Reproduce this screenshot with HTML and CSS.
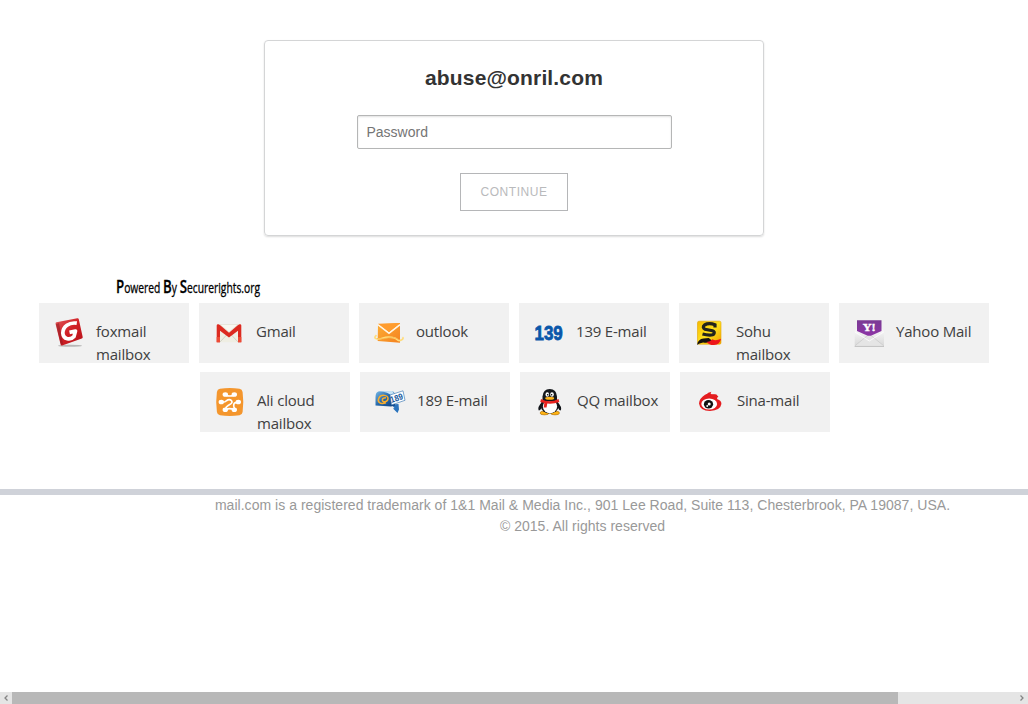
FILE: index.html
```html
<!DOCTYPE html>
<html lang="en">
<head>
<meta charset="utf-8">
<title>Mail sign in</title>
<link rel="stylesheet" href="styles.css">
</head>
<body>
<div class="page">
  <form class="login">
    <h1 class="account">abuse@onril.com</h1>
    <input class="password" type="password" placeholder="Password" aria-label="Password">
    <button class="continue" type="button">CONTINUE</button>
  </form>

  <p class="powered"><span class="powered-text"><b>P</b>owered <b>B</b>y <b>S</b>ecurerights.org</span></p>

  <div class="providers">
    <div class="card">
      <svg class="icon" viewBox="0 0 32 32">
        <defs><linearGradient id="fox" x1="0" y1="0" x2="1" y2="1"><stop offset="0" stop-color="#e0595a"/><stop offset=".5" stop-color="#d01f25"/><stop offset="1" stop-color="#b5121a"/></linearGradient></defs>
        <ellipse cx="17" cy="29.8" rx="12" ry="1" fill="#aaa" opacity=".8"/>
        <path d="M3.5 6.3 24.3 2.3q1.2-.2 1.5 1L29.7 21q.2 1.1-.9 1.5L9.2 29.4q-1.3.4-1.6-.9L2.6 7.9q-.3-1.3.9-1.6Z" fill="url(#fox)"/>
        <path d="M3 8.2 8 28.7l2-.7L6 7Z" fill="#8e1820" opacity=".55"/>
        <path d="M23.8 7.200 C16 6 10 10.500 9.800 17 C10.300 23.500 17.500 24.500 21 20.500 L22.500 15 L16.500 16.400" fill="none" stroke="#fff" stroke-width="3.700" stroke-linejoin="round"/>
      </svg>
      <span class="name">foxmail mailbox</span>
    </div>
    <div class="card">
      <svg class="icon" viewBox="0 0 32 32">
        <rect x="5" y="8.5" width="22" height="17.7" fill="#efeee3"/>
        <path d="M7 26 14 18.5M25 26l-7-7.500" stroke="#c9c9bd" stroke-width=".8"/>
        <path d="M7 8.500h18L16 16Z" fill="#f8f8f1" stroke="#ddd9ca" stroke-width=".5"/>
        <path d="M3.700 26.300V9.500q0-1.500 1.800-1.200 1 .2 2 1.100L16 16.800l8.500-7.400q1-.9 2-1.100 1.800-.3 1.800 1.200v16.800H25V14.700l-9 6.800-9-6.800v11.600Z" fill="#dc2a20"/>
        <path d="M3.700 21H7v5.300H3.700ZM25 21h3.300v5.300H25Z" fill="#ed4b35"/>
      </svg>
      <span class="name">Gmail</span>
    </div>
    <div class="card">
      <svg class="icon" viewBox="0 0 32 32">
        <defs><linearGradient id="out" x2="1" y2="1"><stop stop-color="#fcae35"/><stop offset="1" stop-color="#f58220"/></linearGradient></defs>
        <path d="M5 8.200 27 7v19.700L4.700 25Z" fill="url(#out)"/>
        <path d="M5 8.500 16 17.200 27 8.600" fill="none" stroke="#fff6e6" stroke-width="1.800"/>
        <path d="M5 7.700 16 16 27 7Z" fill="#ff9c2e"/>
        <path d="M3.500 19.200C-1 23 5 23.800 10 22s13-.5 14 1.500c2 2.500 8-.5 5.500-2.200" fill="none" stroke="#ffdc7b" stroke-width="1.700"/>
        <path d="M4 22.500q7 1 11-.7t9.500 1" fill="none" stroke="#f6b54b" stroke-width=".7"/>
      </svg>
      <span class="name">outlook</span>
    </div>
    <div class="card">
      <svg class="icon" viewBox="0 0 32 32">
        <text class="digits" x="1.500" y="24" textLength="28.300" lengthAdjust="spacingAndGlyphs">139</text>
      </svg>
      <span class="name">139 E-mail</span>
    </div>
    <div class="card">
      <svg class="icon" viewBox="0 0 32 32">
        <defs><linearGradient id="sohu" x2="1" y2="1"><stop stop-color="#f4b900"/><stop offset=".5" stop-color="#ffe11d"/><stop offset="1" stop-color="#f4a100"/></linearGradient></defs>
        <rect x="4.500" y="5.200" width="23.500" height="23" rx="1.500" fill="url(#sohu)" stroke="#e2a500" stroke-width=".6"/>
        <path d="M22 11.500V8.800c-3.500-1.300-8-1.200-10.500.2-1.800 1.400-1.500 3.300.5 4.200l7.500 1.600c2.800.9 2 4-1 4.200-3 .2-6.500-.3-9-1" fill="none" stroke="#24231d" stroke-width="3.200"/>
        <path d="M4 29q1-6 6.500-6.500l5.300-.5 3.300 2.700q-4 3-9 1.700Q6 27.300 4 29Z" fill="#17130e"/>
        <path d="M13.500 26q3.500-.2 6-2.800 3 2.300 8.500-.4-1 6-7 6.300-5 .1-7.500-3.100Z" fill="#ed151b"/>
      </svg>
      <span class="name">Sohu mailbox</span>
    </div>
    <div class="card">
      <svg class="icon" viewBox="0 0 32 32">
        <defs><linearGradient id="env" x2="0" y2="1"><stop stop-color="#fafafa"/><stop offset="1" stop-color="#d7d7d7"/></linearGradient><linearGradient id="purple" x2="0" y2="1"><stop stop-color="#7a3b94"/><stop offset="1" stop-color="#8d34a6"/></linearGradient></defs>
        <path d="M1.700 15 4 12.500h24.500L31 15v15.500H1.700Z" fill="url(#env)"/>
        <path d="M2 29.800 16.300 18 30.700 29.800" fill="#e5e5e5" stroke="#c8c8c8" stroke-width=".7"/>
        <path d="M2 16 16.300 25 30.700 16" fill="none" stroke="#fff" stroke-width=".8"/>
        <path d="M1.700 30.500H31" stroke="#bcbcbc" stroke-width=".8"/>
        <path d="M4 4.300h24.500V15L19 19.200q-2.700 1.200-5.400 0L4 15Z" fill="url(#purple)"/>
        <text class="yahoo" x="9.700" y="15" textLength="13" lengthAdjust="spacingAndGlyphs">Y!</text>
      </svg>
      <span class="name">Yahoo Mail</span>
    </div>
  </div>

  <div class="providers providers-second">
    <div class="card">
      <svg class="icon" viewBox="0 0 32 32">
        <path d="M6 3.700Q15.700 2.300 25.500 3.700q2.700.4 3.100 3.200 1.400 10 0 20-.4 2.900-3.100 3.400-9.800 1.400-19.500 0-2.700-.5-3.100-3.400-1.400-10 0-20Q3.300 4.100 6 3.700Z" fill="#f4962d"/>
        <g fill="#fff">
          <ellipse cx="11.300" cy="9.500" rx="2.700" ry="2.300"/><ellipse cx="20.300" cy="9.500" rx="2.700" ry="2.300"/>
          <ellipse cx="7.300" cy="17" rx="2.700" ry="2.300"/><ellipse cx="24.300" cy="17" rx="2.700" ry="2.300"/>
          <ellipse cx="11.300" cy="24.700" rx="2.700" ry="2.300"/><ellipse cx="20.300" cy="24.700" rx="2.700" ry="2.300"/>
        </g>
        <path d="M11.500 10.200q4.300 1.600 8.600 0M8 17.200q3 .2 4.500-1.500 2.800-2 5 0 1.300 1.700-.8 3.200l-2.900 1.900q-2 1.200-2.300 3.400M24 17.200q-3.500.2-4.200 2-.6 1.800.8 4.800M12 24.300q3.500-1.600 8.500.3" fill="none" stroke="#fff" stroke-width="1.700"/>
      </svg>
      <span class="name">Ali cloud mailbox</span>
    </div>
    <div class="card">
      <svg class="icon" viewBox="0 0 32 32">
        <defs><linearGradient id="box" x2="1" y2="1"><stop stop-color="#78b9e7"/><stop offset=".5" stop-color="#2467a9"/><stop offset="1" stop-color="#12417e"/></linearGradient></defs>
        <path d="M17 19.500 20.500 23l-1.500.5 4.500 4.500 1.500-3.500-.5-5.500Z" fill="#2a73bc"/>
        <path d="M1.500 12Q1.500 7 5 6.200L18 6q3 1 3 5v9.500l-4 1L1.500 20.500Z" fill="url(#box)"/>
        <path d="M4.500 6.200 18.500 6l2.500 4-3.500 1Q15 7 4.500 6.200Z" fill="#c8e4f5"/>
        <path d="M12 17.800C5.500 20 3 16.500 5 12.800s9-3 9 .7-5.500 4.200-5.700 1.700 3.700-2.400 3.700-2.400" fill="none" stroke="#f7ad2e" stroke-width="1.500"/>
        <path d="m16 10 13-4.200 2 9.500L17.500 20Z" fill="#fff" stroke="#286cac" stroke-width=".6"/>
        <text class="tag" x="17.300" y="18" transform="rotate(-18 17.300 18)" textLength="13" lengthAdjust="spacingAndGlyphs">189</text>
      </svg>
      <span class="name">189 E-mail</span>
    </div>
    <div class="card">
      <svg class="icon" viewBox="0 0 32 32">
        <path d="M8.500 16.500Q3 22 4.800 25.500q1.500 0 3-3ZM23 16.500q5.500 5.500 3.700 9-1.500 0-3-3Z" fill="#101318"/>
        <ellipse cx="10.500" cy="28" rx="4.500" ry="1.900" fill="#ffb313" stroke="#9b5c00" stroke-width=".5"/>
        <ellipse cx="21" cy="28" rx="4.500" ry="1.900" fill="#ffb313" stroke="#9b5c00" stroke-width=".5"/>
        <ellipse cx="15.700" cy="20.500" rx="9" ry="8" fill="#15171b"/>
        <ellipse cx="16" cy="21.500" rx="7.100" ry="6.700" fill="#fff"/>
        <path d="M8.500 15V11.500q.5-7.200 7.200-7.500 6.800.3 7.300 7.500V15q-7 3-14.500 0Z" fill="#15171b"/>
        <ellipse cx="13.300" cy="9.500" rx="1.800" ry="2.300" fill="#fff"/><ellipse cx="18" cy="9.500" rx="1.800" ry="2.300" fill="#fff"/>
        <circle cx="13.700" cy="9.800" r=".8"/><circle cx="17.600" cy="9.800" r=".8"/>
        <ellipse cx="15.700" cy="13.200" rx="4.500" ry="1.500" fill="#ffb51b"/>
        <path d="M7 14q8.500 4.500 17.500 0l.8 3q-9 3.500-19 0Z" fill="#e82320"/><path d="m10.500 17 3 .5-1 5H9.700Z" fill="#e82320"/>
      </svg>
      <span class="name">QQ mailbox</span>
    </div>
    <div class="card">
      <svg class="icon" viewBox="0 0 32 32">
        <path d="M5 18.500Q5.300 13.500 11 9.800q4.500-2.500 5 .7 5-2 7 .3 1 1.500 0 3.300 4.700 1.600 4.400 5Q26.500 25.500 16 26 6 26 5 18.500Z" fill="#e41d20"/>
        <path d="M11.500 10.500Q14 7 17.500 6.700 15.500 9 18 9.300l4.500.2 2 2.500-8.500.5Z" fill="#e41d20"/>
        <ellipse cx="15.200" cy="19" rx="7.900" ry="5.500" fill="#fff"/>
        <ellipse cx="14.500" cy="19.300" rx="4.600" ry="4.200" fill="#111"/><circle cx="15.200" cy="18.900" r="1.500" fill="#fff"/><circle cx="13.200" cy="21" r=".9" fill="#fff"/>
      </svg>
      <span class="name">Sina-mail</span>
    </div>
  </div>

  <footer class="footer">
    <p class="legal">mail.com is a registered trademark of 1&amp;1 Mail &amp; Media Inc., 901 Lee Road, Suite 113, Chesterbrook, PA 19087, USA.<br>© 2015. All rights reserved</p>
  </footer>

  <div class="scrollbar">
    <svg class="arrow" viewBox="0 0 12 12"><path d="M7.500 3.500 5 6l2.500 2.500"/></svg>
    <div class="thumb"></div>
    <svg class="arrow" viewBox="0 0 12 12"><path d="M4.500 3.500 7 6 4.500 8.500"/></svg>
  </div>
</div>
</body>
</html>
```
FILE: styles.css
```css
* { box-sizing: border-box; }
body { margin: 0; background: #fff; font-family: "Liberation Sans", Arial, sans-serif; }
.page { width: 1028px; height: 704px; overflow: hidden; display: flex; flex-direction: column; }
.login { width: 500px; height: 196px; flex: none; margin: 40px 0 0 264px; border: 1px solid #d4d5d6; border-radius: 4px; box-shadow: 0 1px 2px rgba(0,0,0,.14); display: flex; flex-direction: column; align-items: center; }
.account { margin: 24px 0 0; font-size: 21px; line-height: 26px; font-weight: bold; letter-spacing: .15px; color: #333; white-space: nowrap; }
.password { width: 315px; height: 34px; margin: 24px 0 0 1px; padding: 0 8px 0 8.5px; border: 1px solid #b5b6b6; border-radius: 2px; box-shadow: inset 0 1px 2px rgba(0,0,0,.12); font: 14px "Liberation Sans", Arial, sans-serif; }
.password::placeholder { color: #757575; }
.continue { width: 108px; height: 38px; margin: 24px 0 0; padding: 0; border: 1px solid #b5b6b8; border-radius: 0; background: #fff; color: #b9babc; font: 12px "Liberation Sans", Arial, sans-serif; letter-spacing: .55px; }
.powered { height: 26px; margin: 37px 0 4px 116px; font: 14px/26px "Open Sans", sans-serif; color: #000; white-space: nowrap; }
.powered-text { display: inline-block; transform: scaleX(.736); transform-origin: 0 0; -webkit-text-stroke: .3px #000; }
.powered b { font-size: 18px; font-weight: 600; }
.providers { display: flex; gap: 10px; height: 60px; flex: none; margin-left: 39px; }
.providers-second { margin: 9px 0 0 200px; }
.card { width: 150px; height: 60px; flex: none; display: flex; padding: 13px 16px 0 14px; background: #f1f1f1; overflow: hidden; }
.icon { width: 32px; height: 32px; flex: none; margin-right: 11px; overflow: visible; }
.name { width: 82px; padding-top: 4px; white-space: normal; font: 15px/23px "Open Sans", "Noto Sans", sans-serif; letter-spacing: -.2px; color: #404040; margin-right: -10px; }
.digits { font: bold 20px "Liberation Sans", sans-serif; fill: #0957aa; stroke: #0957aa; stroke-width: .8px; }
.yahoo { font: bold 11px "Liberation Serif", serif; fill: #fff; stroke: #fff; stroke-width: .4px; }
.tag { font: bold 9px "Liberation Sans", sans-serif; fill: #16589d; }
.footer { width: 1165px; height: 203px; margin-top: 57px; flex: none; border-top: 6px solid #cfd2d9; }
.legal { margin: 0; font-size: 14px; line-height: 21px; letter-spacing: .03px; text-align: center; color: #999; }
.scrollbar { height: 12px; flex: none; display: flex; background: #e5e5e5; justify-content: space-between; }
.thumb { width: 886px; background: #b8b8b8; margin-right: auto; }
.arrow { width: 12px; height: 12px; fill: none; stroke: #858585; stroke-width: 1.3; }
```
